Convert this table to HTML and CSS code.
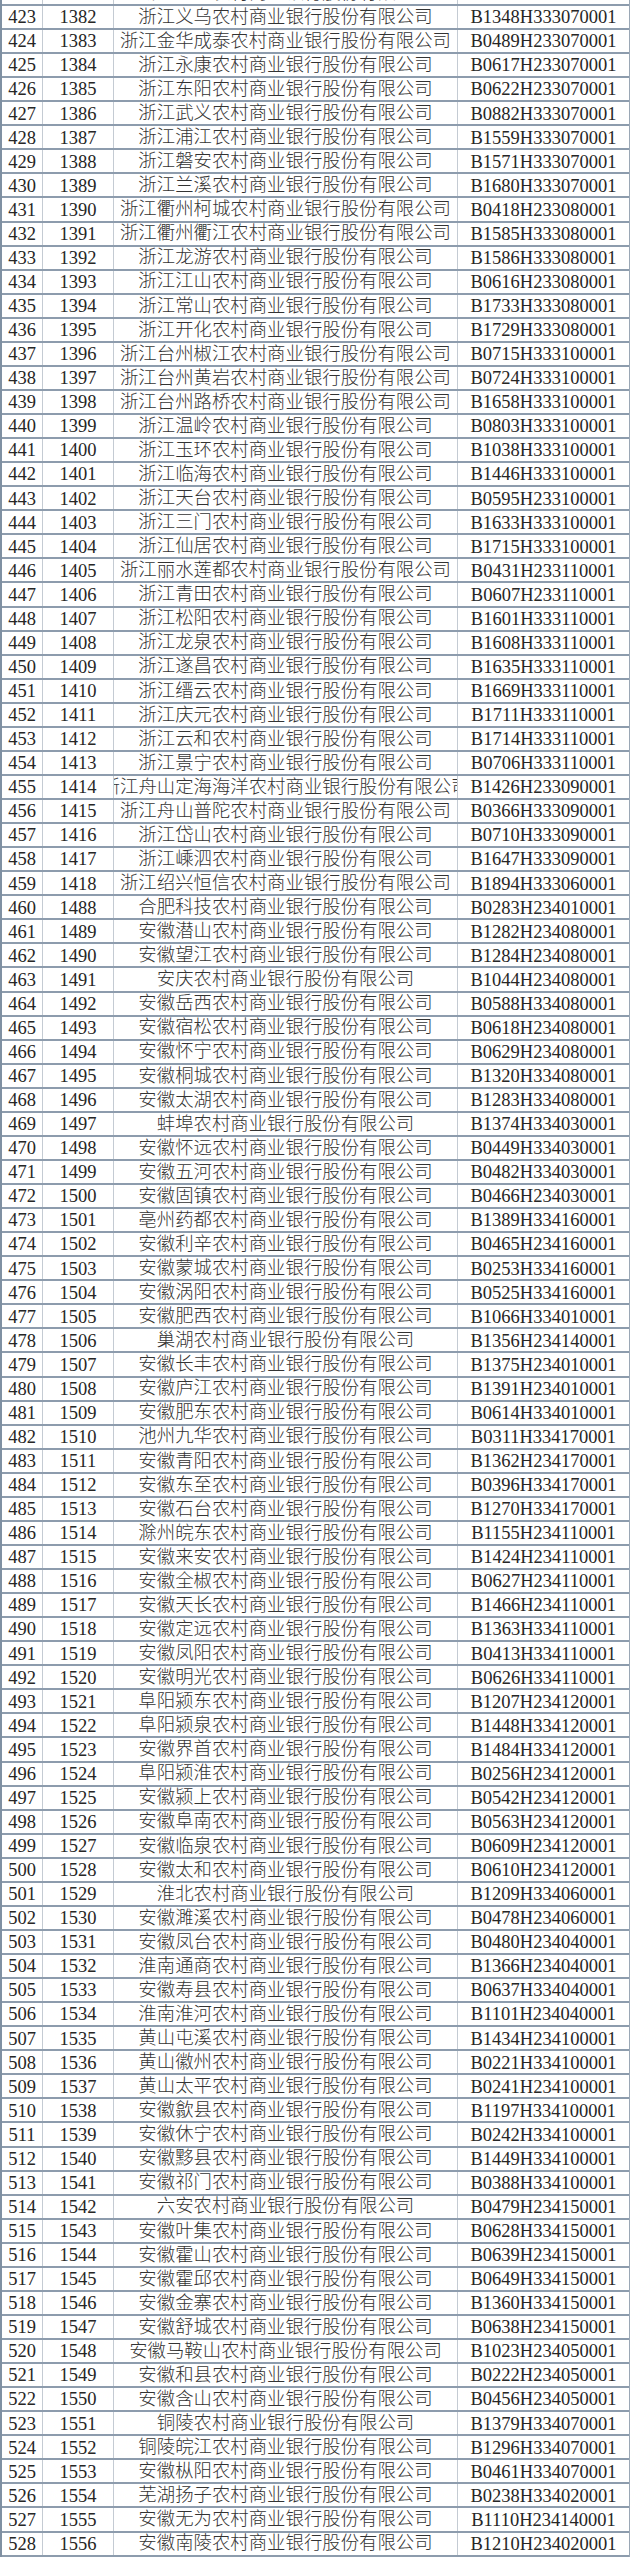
FILE: index.html
```html
<!DOCTYPE html>
<html lang="zh-CN">
<head>
<meta charset="utf-8">
<title>农村商业银行名录</title>
<link rel="stylesheet" href="styles.css">
</head>
<body>
<div class="sheet">
<div class="row"><div class="c n">422</div><div class="c n">1381</div><div class="c t">浙江金东农村商业银行股份有限公司</div><div class="c n">B1348H333070001</div></div>
<div class="row"><div class="c n">423</div><div class="c n">1382</div><div class="c t">浙江义乌农村商业银行股份有限公司</div><div class="c n">B1348H333070001</div></div>
<div class="row"><div class="c n">424</div><div class="c n">1383</div><div class="c t">浙江金华成泰农村商业银行股份有限公司</div><div class="c n">B0489H233070001</div></div>
<div class="row"><div class="c n">425</div><div class="c n">1384</div><div class="c t">浙江永康农村商业银行股份有限公司</div><div class="c n">B0617H233070001</div></div>
<div class="row"><div class="c n">426</div><div class="c n">1385</div><div class="c t">浙江东阳农村商业银行股份有限公司</div><div class="c n">B0622H233070001</div></div>
<div class="row"><div class="c n">427</div><div class="c n">1386</div><div class="c t">浙江武义农村商业银行股份有限公司</div><div class="c n">B0882H333070001</div></div>
<div class="row"><div class="c n">428</div><div class="c n">1387</div><div class="c t">浙江浦江农村商业银行股份有限公司</div><div class="c n">B1559H333070001</div></div>
<div class="row"><div class="c n">429</div><div class="c n">1388</div><div class="c t">浙江磐安农村商业银行股份有限公司</div><div class="c n">B1571H333070001</div></div>
<div class="row"><div class="c n">430</div><div class="c n">1389</div><div class="c t">浙江兰溪农村商业银行股份有限公司</div><div class="c n">B1680H333070001</div></div>
<div class="row"><div class="c n">431</div><div class="c n">1390</div><div class="c t">浙江衢州柯城农村商业银行股份有限公司</div><div class="c n">B0418H233080001</div></div>
<div class="row"><div class="c n">432</div><div class="c n">1391</div><div class="c t">浙江衢州衢江农村商业银行股份有限公司</div><div class="c n">B1585H333080001</div></div>
<div class="row"><div class="c n">433</div><div class="c n">1392</div><div class="c t">浙江龙游农村商业银行股份有限公司</div><div class="c n">B1586H333080001</div></div>
<div class="row"><div class="c n">434</div><div class="c n">1393</div><div class="c t">浙江江山农村商业银行股份有限公司</div><div class="c n">B0616H233080001</div></div>
<div class="row"><div class="c n">435</div><div class="c n">1394</div><div class="c t">浙江常山农村商业银行股份有限公司</div><div class="c n">B1733H333080001</div></div>
<div class="row"><div class="c n">436</div><div class="c n">1395</div><div class="c t">浙江开化农村商业银行股份有限公司</div><div class="c n">B1729H333080001</div></div>
<div class="row"><div class="c n">437</div><div class="c n">1396</div><div class="c t">浙江台州椒江农村商业银行股份有限公司</div><div class="c n">B0715H333100001</div></div>
<div class="row"><div class="c n">438</div><div class="c n">1397</div><div class="c t">浙江台州黄岩农村商业银行股份有限公司</div><div class="c n">B0724H333100001</div></div>
<div class="row"><div class="c n">439</div><div class="c n">1398</div><div class="c t">浙江台州路桥农村商业银行股份有限公司</div><div class="c n">B1658H333100001</div></div>
<div class="row"><div class="c n">440</div><div class="c n">1399</div><div class="c t">浙江温岭农村商业银行股份有限公司</div><div class="c n">B0803H333100001</div></div>
<div class="row"><div class="c n">441</div><div class="c n">1400</div><div class="c t">浙江玉环农村商业银行股份有限公司</div><div class="c n">B1038H333100001</div></div>
<div class="row"><div class="c n">442</div><div class="c n">1401</div><div class="c t">浙江临海农村商业银行股份有限公司</div><div class="c n">B1446H333100001</div></div>
<div class="row"><div class="c n">443</div><div class="c n">1402</div><div class="c t">浙江天台农村商业银行股份有限公司</div><div class="c n">B0595H233100001</div></div>
<div class="row"><div class="c n">444</div><div class="c n">1403</div><div class="c t">浙江三门农村商业银行股份有限公司</div><div class="c n">B1633H333100001</div></div>
<div class="row"><div class="c n">445</div><div class="c n">1404</div><div class="c t">浙江仙居农村商业银行股份有限公司</div><div class="c n">B1715H333100001</div></div>
<div class="row"><div class="c n">446</div><div class="c n">1405</div><div class="c t">浙江丽水莲都农村商业银行股份有限公司</div><div class="c n">B0431H233110001</div></div>
<div class="row"><div class="c n">447</div><div class="c n">1406</div><div class="c t">浙江青田农村商业银行股份有限公司</div><div class="c n">B0607H233110001</div></div>
<div class="row"><div class="c n">448</div><div class="c n">1407</div><div class="c t">浙江松阳农村商业银行股份有限公司</div><div class="c n">B1601H333110001</div></div>
<div class="row"><div class="c n">449</div><div class="c n">1408</div><div class="c t">浙江龙泉农村商业银行股份有限公司</div><div class="c n">B1608H333110001</div></div>
<div class="row"><div class="c n">450</div><div class="c n">1409</div><div class="c t">浙江遂昌农村商业银行股份有限公司</div><div class="c n">B1635H333110001</div></div>
<div class="row"><div class="c n">451</div><div class="c n">1410</div><div class="c t">浙江缙云农村商业银行股份有限公司</div><div class="c n">B1669H333110001</div></div>
<div class="row"><div class="c n">452</div><div class="c n">1411</div><div class="c t">浙江庆元农村商业银行股份有限公司</div><div class="c n">B1711H333110001</div></div>
<div class="row"><div class="c n">453</div><div class="c n">1412</div><div class="c t">浙江云和农村商业银行股份有限公司</div><div class="c n">B1714H333110001</div></div>
<div class="row"><div class="c n">454</div><div class="c n">1413</div><div class="c t">浙江景宁农村商业银行股份有限公司</div><div class="c n">B0706H333110001</div></div>
<div class="row"><div class="c n">455</div><div class="c n">1414</div><div class="c t">浙江舟山定海海洋农村商业银行股份有限公司</div><div class="c n">B1426H233090001</div></div>
<div class="row"><div class="c n">456</div><div class="c n">1415</div><div class="c t">浙江舟山普陀农村商业银行股份有限公司</div><div class="c n">B0366H333090001</div></div>
<div class="row"><div class="c n">457</div><div class="c n">1416</div><div class="c t">浙江岱山农村商业银行股份有限公司</div><div class="c n">B0710H333090001</div></div>
<div class="row"><div class="c n">458</div><div class="c n">1417</div><div class="c t">浙江嵊泗农村商业银行股份有限公司</div><div class="c n">B1647H333090001</div></div>
<div class="row"><div class="c n">459</div><div class="c n">1418</div><div class="c t">浙江绍兴恒信农村商业银行股份有限公司</div><div class="c n">B1894H333060001</div></div>
<div class="row"><div class="c n">460</div><div class="c n">1488</div><div class="c t">合肥科技农村商业银行股份有限公司</div><div class="c n">B0283H234010001</div></div>
<div class="row"><div class="c n">461</div><div class="c n">1489</div><div class="c t">安徽潜山农村商业银行股份有限公司</div><div class="c n">B1282H234080001</div></div>
<div class="row"><div class="c n">462</div><div class="c n">1490</div><div class="c t">安徽望江农村商业银行股份有限公司</div><div class="c n">B1284H234080001</div></div>
<div class="row"><div class="c n">463</div><div class="c n">1491</div><div class="c t">安庆农村商业银行股份有限公司</div><div class="c n">B1044H234080001</div></div>
<div class="row"><div class="c n">464</div><div class="c n">1492</div><div class="c t">安徽岳西农村商业银行股份有限公司</div><div class="c n">B0588H334080001</div></div>
<div class="row"><div class="c n">465</div><div class="c n">1493</div><div class="c t">安徽宿松农村商业银行股份有限公司</div><div class="c n">B0618H234080001</div></div>
<div class="row"><div class="c n">466</div><div class="c n">1494</div><div class="c t">安徽怀宁农村商业银行股份有限公司</div><div class="c n">B0629H234080001</div></div>
<div class="row"><div class="c n">467</div><div class="c n">1495</div><div class="c t">安徽桐城农村商业银行股份有限公司</div><div class="c n">B1320H334080001</div></div>
<div class="row"><div class="c n">468</div><div class="c n">1496</div><div class="c t">安徽太湖农村商业银行股份有限公司</div><div class="c n">B1283H334080001</div></div>
<div class="row"><div class="c n">469</div><div class="c n">1497</div><div class="c t">蚌埠农村商业银行股份有限公司</div><div class="c n">B1374H334030001</div></div>
<div class="row"><div class="c n">470</div><div class="c n">1498</div><div class="c t">安徽怀远农村商业银行股份有限公司</div><div class="c n">B0449H334030001</div></div>
<div class="row"><div class="c n">471</div><div class="c n">1499</div><div class="c t">安徽五河农村商业银行股份有限公司</div><div class="c n">B0482H334030001</div></div>
<div class="row"><div class="c n">472</div><div class="c n">1500</div><div class="c t">安徽固镇农村商业银行股份有限公司</div><div class="c n">B0466H234030001</div></div>
<div class="row"><div class="c n">473</div><div class="c n">1501</div><div class="c t">亳州药都农村商业银行股份有限公司</div><div class="c n">B1389H334160001</div></div>
<div class="row"><div class="c n">474</div><div class="c n">1502</div><div class="c t">安徽利辛农村商业银行股份有限公司</div><div class="c n">B0465H234160001</div></div>
<div class="row"><div class="c n">475</div><div class="c n">1503</div><div class="c t">安徽蒙城农村商业银行股份有限公司</div><div class="c n">B0253H334160001</div></div>
<div class="row"><div class="c n">476</div><div class="c n">1504</div><div class="c t">安徽涡阳农村商业银行股份有限公司</div><div class="c n">B0525H334160001</div></div>
<div class="row"><div class="c n">477</div><div class="c n">1505</div><div class="c t">安徽肥西农村商业银行股份有限公司</div><div class="c n">B1066H334010001</div></div>
<div class="row"><div class="c n">478</div><div class="c n">1506</div><div class="c t">巢湖农村商业银行股份有限公司</div><div class="c n">B1356H234140001</div></div>
<div class="row"><div class="c n">479</div><div class="c n">1507</div><div class="c t">安徽长丰农村商业银行股份有限公司</div><div class="c n">B1375H234010001</div></div>
<div class="row"><div class="c n">480</div><div class="c n">1508</div><div class="c t">安徽庐江农村商业银行股份有限公司</div><div class="c n">B1391H234010001</div></div>
<div class="row"><div class="c n">481</div><div class="c n">1509</div><div class="c t">安徽肥东农村商业银行股份有限公司</div><div class="c n">B0614H334010001</div></div>
<div class="row"><div class="c n">482</div><div class="c n">1510</div><div class="c t">池州九华农村商业银行股份有限公司</div><div class="c n">B0311H334170001</div></div>
<div class="row"><div class="c n">483</div><div class="c n">1511</div><div class="c t">安徽青阳农村商业银行股份有限公司</div><div class="c n">B1362H234170001</div></div>
<div class="row"><div class="c n">484</div><div class="c n">1512</div><div class="c t">安徽东至农村商业银行股份有限公司</div><div class="c n">B0396H334170001</div></div>
<div class="row"><div class="c n">485</div><div class="c n">1513</div><div class="c t">安徽石台农村商业银行股份有限公司</div><div class="c n">B1270H334170001</div></div>
<div class="row"><div class="c n">486</div><div class="c n">1514</div><div class="c t">滁州皖东农村商业银行股份有限公司</div><div class="c n">B1155H234110001</div></div>
<div class="row"><div class="c n">487</div><div class="c n">1515</div><div class="c t">安徽来安农村商业银行股份有限公司</div><div class="c n">B1424H234110001</div></div>
<div class="row"><div class="c n">488</div><div class="c n">1516</div><div class="c t">安徽全椒农村商业银行股份有限公司</div><div class="c n">B0627H234110001</div></div>
<div class="row"><div class="c n">489</div><div class="c n">1517</div><div class="c t">安徽天长农村商业银行股份有限公司</div><div class="c n">B1466H234110001</div></div>
<div class="row"><div class="c n">490</div><div class="c n">1518</div><div class="c t">安徽定远农村商业银行股份有限公司</div><div class="c n">B1363H334110001</div></div>
<div class="row"><div class="c n">491</div><div class="c n">1519</div><div class="c t">安徽凤阳农村商业银行股份有限公司</div><div class="c n">B0413H334110001</div></div>
<div class="row"><div class="c n">492</div><div class="c n">1520</div><div class="c t">安徽明光农村商业银行股份有限公司</div><div class="c n">B0626H334110001</div></div>
<div class="row"><div class="c n">493</div><div class="c n">1521</div><div class="c t">阜阳颍东农村商业银行股份有限公司</div><div class="c n">B1207H234120001</div></div>
<div class="row"><div class="c n">494</div><div class="c n">1522</div><div class="c t">阜阳颍泉农村商业银行股份有限公司</div><div class="c n">B1448H334120001</div></div>
<div class="row"><div class="c n">495</div><div class="c n">1523</div><div class="c t">安徽界首农村商业银行股份有限公司</div><div class="c n">B1484H334120001</div></div>
<div class="row"><div class="c n">496</div><div class="c n">1524</div><div class="c t">阜阳颍淮农村商业银行股份有限公司</div><div class="c n">B0256H234120001</div></div>
<div class="row"><div class="c n">497</div><div class="c n">1525</div><div class="c t">安徽颍上农村商业银行股份有限公司</div><div class="c n">B0542H234120001</div></div>
<div class="row"><div class="c n">498</div><div class="c n">1526</div><div class="c t">安徽阜南农村商业银行股份有限公司</div><div class="c n">B0563H234120001</div></div>
<div class="row"><div class="c n">499</div><div class="c n">1527</div><div class="c t">安徽临泉农村商业银行股份有限公司</div><div class="c n">B0609H234120001</div></div>
<div class="row"><div class="c n">500</div><div class="c n">1528</div><div class="c t">安徽太和农村商业银行股份有限公司</div><div class="c n">B0610H234120001</div></div>
<div class="row"><div class="c n">501</div><div class="c n">1529</div><div class="c t">淮北农村商业银行股份有限公司</div><div class="c n">B1209H334060001</div></div>
<div class="row"><div class="c n">502</div><div class="c n">1530</div><div class="c t">安徽濉溪农村商业银行股份有限公司</div><div class="c n">B0478H234060001</div></div>
<div class="row"><div class="c n">503</div><div class="c n">1531</div><div class="c t">安徽凤台农村商业银行股份有限公司</div><div class="c n">B0480H234040001</div></div>
<div class="row"><div class="c n">504</div><div class="c n">1532</div><div class="c t">淮南通商农村商业银行股份有限公司</div><div class="c n">B1366H234040001</div></div>
<div class="row"><div class="c n">505</div><div class="c n">1533</div><div class="c t">安徽寿县农村商业银行股份有限公司</div><div class="c n">B0637H334040001</div></div>
<div class="row"><div class="c n">506</div><div class="c n">1534</div><div class="c t">淮南淮河农村商业银行股份有限公司</div><div class="c n">B1101H234040001</div></div>
<div class="row"><div class="c n">507</div><div class="c n">1535</div><div class="c t">黄山屯溪农村商业银行股份有限公司</div><div class="c n">B1434H234100001</div></div>
<div class="row"><div class="c n">508</div><div class="c n">1536</div><div class="c t">黄山徽州农村商业银行股份有限公司</div><div class="c n">B0221H334100001</div></div>
<div class="row"><div class="c n">509</div><div class="c n">1537</div><div class="c t">黄山太平农村商业银行股份有限公司</div><div class="c n">B0241H234100001</div></div>
<div class="row"><div class="c n">510</div><div class="c n">1538</div><div class="c t">安徽歙县农村商业银行股份有限公司</div><div class="c n">B1197H334100001</div></div>
<div class="row"><div class="c n">511</div><div class="c n">1539</div><div class="c t">安徽休宁农村商业银行股份有限公司</div><div class="c n">B0242H334100001</div></div>
<div class="row"><div class="c n">512</div><div class="c n">1540</div><div class="c t">安徽黟县农村商业银行股份有限公司</div><div class="c n">B1449H334100001</div></div>
<div class="row"><div class="c n">513</div><div class="c n">1541</div><div class="c t">安徽祁门农村商业银行股份有限公司</div><div class="c n">B0388H334100001</div></div>
<div class="row"><div class="c n">514</div><div class="c n">1542</div><div class="c t">六安农村商业银行股份有限公司</div><div class="c n">B0479H234150001</div></div>
<div class="row"><div class="c n">515</div><div class="c n">1543</div><div class="c t">安徽叶集农村商业银行股份有限公司</div><div class="c n">B0628H334150001</div></div>
<div class="row"><div class="c n">516</div><div class="c n">1544</div><div class="c t">安徽霍山农村商业银行股份有限公司</div><div class="c n">B0639H234150001</div></div>
<div class="row"><div class="c n">517</div><div class="c n">1545</div><div class="c t">安徽霍邱农村商业银行股份有限公司</div><div class="c n">B0649H334150001</div></div>
<div class="row"><div class="c n">518</div><div class="c n">1546</div><div class="c t">安徽金寨农村商业银行股份有限公司</div><div class="c n">B1360H334150001</div></div>
<div class="row"><div class="c n">519</div><div class="c n">1547</div><div class="c t">安徽舒城农村商业银行股份有限公司</div><div class="c n">B0638H234150001</div></div>
<div class="row"><div class="c n">520</div><div class="c n">1548</div><div class="c t">安徽马鞍山农村商业银行股份有限公司</div><div class="c n">B1023H234050001</div></div>
<div class="row"><div class="c n">521</div><div class="c n">1549</div><div class="c t">安徽和县农村商业银行股份有限公司</div><div class="c n">B0222H234050001</div></div>
<div class="row"><div class="c n">522</div><div class="c n">1550</div><div class="c t">安徽含山农村商业银行股份有限公司</div><div class="c n">B0456H234050001</div></div>
<div class="row"><div class="c n">523</div><div class="c n">1551</div><div class="c t">铜陵农村商业银行股份有限公司</div><div class="c n">B1379H334070001</div></div>
<div class="row"><div class="c n">524</div><div class="c n">1552</div><div class="c t">铜陵皖江农村商业银行股份有限公司</div><div class="c n">B1296H334070001</div></div>
<div class="row"><div class="c n">525</div><div class="c n">1553</div><div class="c t">安徽枞阳农村商业银行股份有限公司</div><div class="c n">B0461H334070001</div></div>
<div class="row"><div class="c n">526</div><div class="c n">1554</div><div class="c t">芜湖扬子农村商业银行股份有限公司</div><div class="c n">B0238H334020001</div></div>
<div class="row"><div class="c n">527</div><div class="c n">1555</div><div class="c t">安徽无为农村商业银行股份有限公司</div><div class="c n">B1110H234140001</div></div>
<div class="row"><div class="c n">528</div><div class="c n">1556</div><div class="c t">安徽南陵农村商业银行股份有限公司</div><div class="c n">B1210H234020001</div></div>
</div>
</body>
</html>
```
FILE: styles.css
```css
html, body {
  margin: 0;
  padding: 0;
  background: #ffffff;
}
body {
  width: 630px;
  overflow: hidden;
}
.sheet {
  margin-top: -18.1px;
  width: 630px;
  box-sizing: border-box;
  border-left: 2px solid #7f90a2;
  border-right: 1px solid #9aa7b5;
}
.row {
  display: grid;
  grid-template-columns: 41px 71px 344px 1fr;
  height: 24.07px;
  box-sizing: border-box;
  border-bottom: 2px solid #8d9cad;
}
.c {
  display: flex;
  align-items: center;
  justify-content: center;
  overflow: hidden;
  white-space: nowrap;
  box-sizing: border-box;
  border-right: 1px solid #c4cbd3;
  color: #262626;
  line-height: 1;
}
.c:last-child {
  border-right: none;
}
.n {
  font-family: "Liberation Serif", "Times New Roman", serif;
  font-size: 18.5px;
  padding-top: 1px;
}
.t {
  font-family: "Liberation Serif", "Noto Sans CJK SC", sans-serif;
  font-size: 18.4px;
  font-weight: 300;
  color: #333333;
}
```
